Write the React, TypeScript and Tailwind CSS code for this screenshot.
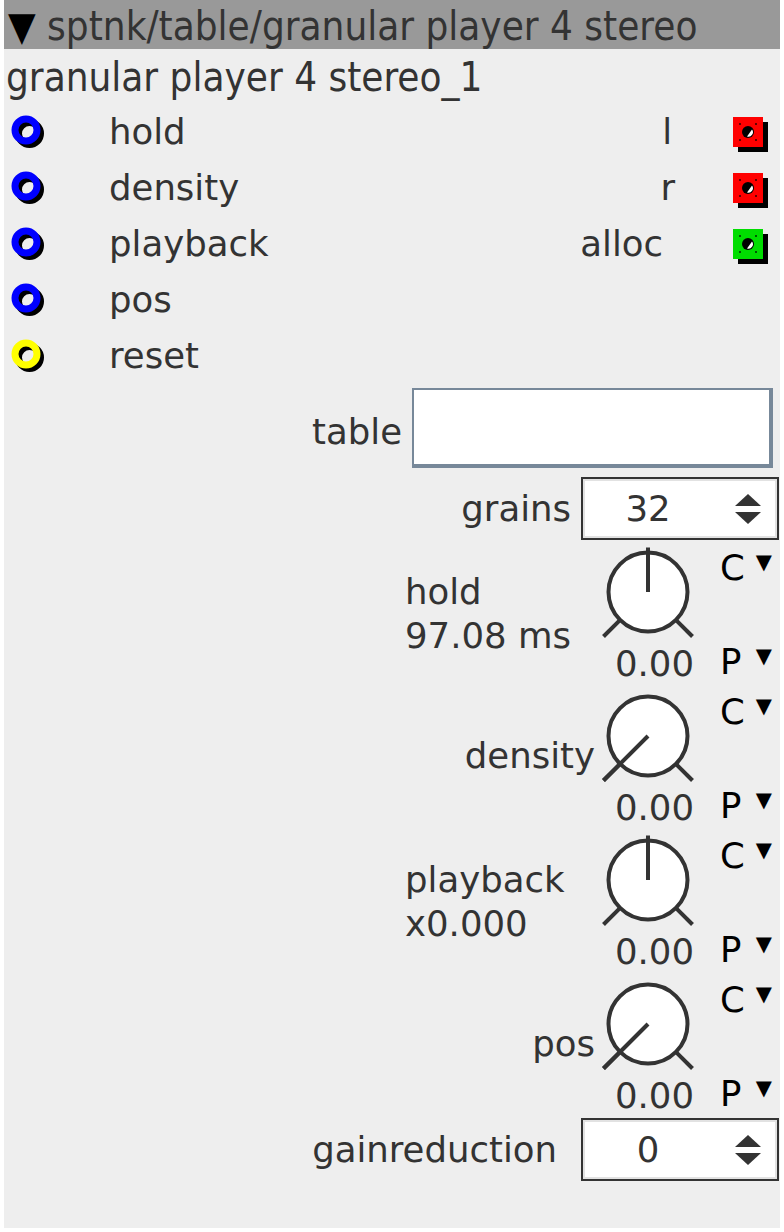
import React from 'react'

const ink = '#333333'

function InPort({ color }: { color: string }) {
  return (
    <svg width="44" height="44" viewBox="0 0 44 44" className="shrink-0">
      <circle cx="21.5" cy="23.5" r="11" fill="none" stroke="#000" strokeWidth="7" />
      <circle cx="18" cy="20" r="11" fill="none" stroke={color} strokeWidth="7" />
    </svg>
  )
}

function OutPort({ color }: { color: string }) {
  return (
    <svg width="40" height="40" viewBox="0 0 40 40" className="shrink-0">
      <rect x="8" y="10" width="30" height="30" fill="#000" />
      <rect x="3" y="5" width="30" height="30" fill={color} />
      <circle cx="18" cy="20" r="6" fill="#000" />
      <path d="M22 17.5 A4.5 4.5 0 0 1 17 24.5 Z" fill="#fff" />
      <rect x="9" y="11" width="2" height="2" fill="#000" opacity="0.6" />
      <rect x="25" y="11" width="2" height="2" fill="#000" opacity="0.6" />
      <rect x="9" y="27" width="2" height="2" fill="#000" opacity="0.6" />
      <rect x="25" y="27" width="2" height="2" fill="#000" opacity="0.6" />
    </svg>
  )
}

function Knob({ atMin }: { atMin: boolean }) {
  const d = 44.5
  return (
    <svg width="100" height="100" viewBox="0 0 100 100">
      <circle cx="50" cy="50" r="39.5" fill="#fff" stroke={ink} strokeWidth="4" />
      <line x1="21.7" y1="78.3" x2="5.5" y2="94.5" stroke={ink} strokeWidth="4" />
      <line x1="78.3" y1="78.3" x2="94.5" y2="94.5" stroke={ink} strokeWidth="4" />
      {atMin ? (
        <line x1="50" y1="50" x2={50 - d} y2={50 + d} stroke={ink} strokeWidth="4" />
      ) : (
        <line x1="50" y1="50" x2="50" y2="5.5" stroke={ink} strokeWidth="4" />
      )}
    </svg>
  )
}

function Spin({ value }: { value: string }) {
  return (
    <div className="w-[198px] h-[63px] border-2 border-[#333333] bg-white">
      <div className="h-full border-2 border-[#e2e2e2] flex items-center">
        <span className="w-[126px] text-center text-[#333333]">{value}</span>
        <svg width="26" height="32" viewBox="0 0 26 32" className="ml-[24px]">
          <path d="M13 1 L26 13 L0 13 Z" fill={ink} />
          <path d="M0 19 L26 19 L13 31 Z" fill={ink} />
        </svg>
      </div>
    </div>
  )
}

function Drop({ letter }: { letter: string }) {
  return (
    <div className="flex items-center h-[44px] text-black">
      <span className="w-[36px]">{letter}</span>
      <span className="text-[21px] leading-none -mt-[12px]">▼</span>
    </div>
  )
}

type KnobRowProps = {
  lines: string[]
  atMin: boolean
}

function KnobRow({ lines, atMin }: KnobRowProps) {
  const two = lines.length > 1
  return (
    <div className="flex h-[144px] pr-[8px]">
      <div className={two ? 'flex-1 pl-[401px] pt-[28px]' : 'flex-1 flex justify-end pr-[3px] pt-[48px]'}>
        <div className="leading-[44px] text-[#333333]">
          {lines.map((l) => (
            <div key={l}>{l}</div>
          ))}
        </div>
      </div>
      <div className="w-[100px] flex flex-col">
        <Knob atMin={atMin} />
        <div className="text-right pr-[4px] leading-[44px] text-[#333333]">0.00</div>
      </div>
      <div className="w-[52px] ml-[22px] flex flex-col justify-between pt-[4px] pb-[2px]">
        <Drop letter="C" />
        <Drop letter="P" />
      </div>
    </div>
  )
}

const titleFont = { fontFamily: '"DejaVu Sans Condensed", "DejaVu Sans", sans-serif', fontStretch: 'condensed' }

export default function App() {
  return (
    <div className="w-[784px] h-[1232px] bg-white px-[4px] text-[35.5px]" style={{ fontFamily: '"DejaVu Sans", sans-serif' }}>
      <div className="h-[1228px] bg-[#eeeeee]">
        <div
          className="h-[49px] bg-[#999999] text-[#333333] text-[40px] leading-[52px] pl-[4px] whitespace-nowrap overflow-hidden"
          style={titleFont}
        >
          <span className="text-black">▼</span> sptnk/table/granular player 4 stereo
        </div>
        <div className="h-[55px] text-[#333333] text-[40px] leading-[56px] pl-[2px] whitespace-nowrap" style={titleFont}>
          granular player 4 stereo_1
        </div>

        <div className="flex">
          <div className="flex-1">
            {[
              ['hold', '#0000ff'],
              ['density', '#0000ff'],
              ['playback', '#0000ff'],
              ['pos', '#0000ff'],
              ['reset', '#ffff00'],
            ].map(([name, c]) => (
              <div key={name} className="h-[56px] flex items-center">
                <div className="ml-[4px]">
                  <InPort color={c} />
                </div>
                <span className="ml-[57px] text-[#333333]">{name}</span>
              </div>
            ))}
          </div>
          <div className="w-[300px]">
            <div className="h-[56px] flex items-center justify-end pr-[10px]">
              <span className="mr-[58px] text-[#333333]">l</span>
              <OutPort color="#ff0000" />
            </div>
            <div className="h-[56px] flex items-center justify-end pr-[10px]">
              <span className="mr-[55px] text-[#333333]">r</span>
              <OutPort color="#ff0000" />
            </div>
            <div className="h-[56px] flex items-center justify-end pr-[10px]">
              <span className="mr-[67px] text-[#333333]">alloc</span>
              <OutPort color="#00dd00" />
            </div>
          </div>
        </div>

        <div className="mt-[4px] flex items-center justify-end pr-[7px]">
          <span className="mr-[10px] mt-[8px] text-[#333333]">table</span>
          <div className="w-[361px] h-[80px] bg-white border-t-2 border-l-2 border-b-[4px] border-r-[4px] border-[#778899]" />
        </div>

        <div className="mt-[9px] flex items-center justify-end pr-[1px]">
          <span className="mr-[10px] text-[#333333]">grains</span>
          <Spin value="32" />
        </div>

        <div className="mt-[2px]">
          <KnobRow lines={['hold', '97.08 ms']} atMin={false} />
          <KnobRow lines={['density']} atMin={true} />
          <KnobRow lines={['playback', 'x0.000']} atMin={false} />
          <KnobRow lines={['pos']} atMin={true} />
        </div>

        <div className="flex items-center justify-end pr-[1px]">
          <span className="mr-[24px] text-[#333333]">gainreduction</span>
          <Spin value="0" />
        </div>
      </div>
    </div>
  )
}
